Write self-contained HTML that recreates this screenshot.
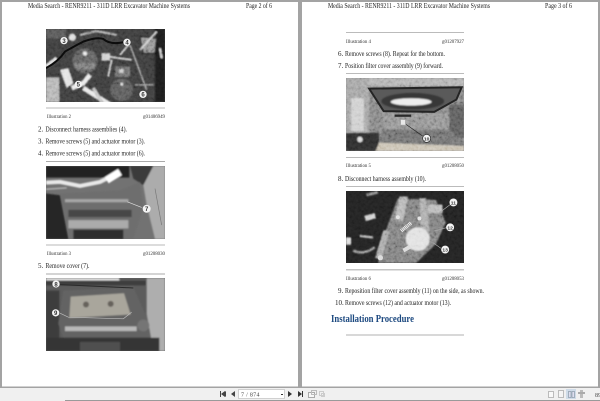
<!DOCTYPE html>
<html><head><meta charset="utf-8"><style>
html,body{margin:0;padding:0;width:600px;height:401px;overflow:hidden;background:#a3a3a3}
svg{display:block}
text{font-family:"Liberation Serif",serif;fill:#222}
.t{font-size:7px}.c{font-size:5.6px;fill:#333}
.n{font-family:"Liberation Sans",sans-serif;font-size:18px;font-weight:bold;fill:#333;text-anchor:middle}
.nz{mix-blend-mode:overlay}
</style></head><body>
<svg width="600" height="401" viewBox="0 0 600 401" xmlns="http://www.w3.org/2000/svg">
<defs>
<filter id="b" x="-5%" y="-5%" width="110%" height="110%"><feGaussianBlur stdDeviation="2.500"/></filter>
<filter id="tb"><feGaussianBlur stdDeviation="0.320"/></filter>
<filter id="noise" x="0" y="0" width="100%" height="100%"><feTurbulence type="fractalNoise" baseFrequency="0.11" numOctaves="2" seed="7"/><feColorMatrix values="1.500 0 0 0 -.25  1.500 0 0 0 -.25  1.500 0 0 0 -.25  0 0 0 0 .28"/></filter>
</defs>
<rect width="600" height="401" fill="#a3a3a3"/>
<rect x="2" y="2" width="296" height="384.500" fill="#fff"/>
<rect x="302" y="2" width="296" height="384.500" fill="#fff"/>
<rect x="0" y="388" width="600" height="13" fill="#f0f0f0"/>
<rect x="65" y="400" width="535" height="1" fill="#9a9a9a"/>

<g filter="url(#tb)">
<text class="t" x="28" y="8" textLength="162" lengthAdjust="spacingAndGlyphs">Media Search - RENR9211 - 311D LRR Excavator Machine Systems</text>
<text class="t" x="246" y="8" textLength="26" lengthAdjust="spacingAndGlyphs">Page 2 of 6</text>
<text class="t" x="328" y="8" textLength="162" lengthAdjust="spacingAndGlyphs">Media Search - RENR9211 - 311D LRR Excavator Machine Systems</text>
<text class="t" x="545" y="8" textLength="27" lengthAdjust="spacingAndGlyphs">Page 3 of 6</text>

<rect x="46" y="107" width="119" height="2" fill="#dcdcdc"/>
<text class="c" x="47" y="118" textLength="24" lengthAdjust="spacingAndGlyphs">Illustration 2</text>
<text class="c" x="143" y="118" textLength="22" lengthAdjust="spacingAndGlyphs">g01406949</text>
<text class="t" x="38" y="131.500">2.</text><text class="t" x="45.500" y="131.500" textLength="81.500" lengthAdjust="spacingAndGlyphs">Disconnect harness assemblies (4).</text>
<text class="t" x="38" y="143.500">3.</text><text class="t" x="45.500" y="143.500" textLength="99.500" lengthAdjust="spacingAndGlyphs">Remove screws (5) and actuator motor (3).</text>
<text class="t" x="38" y="155.500">4.</text><text class="t" x="45.500" y="155.500" textLength="99.500" lengthAdjust="spacingAndGlyphs">Remove screws (5) and actuator motor (6).</text>
<rect x="46" y="161" width="119" height="1" fill="#aaa"/>
<rect x="46" y="244" width="119" height="2" fill="#dcdcdc"/>
<text class="c" x="47" y="255" textLength="24" lengthAdjust="spacingAndGlyphs">Illustration 3</text>
<text class="c" x="143" y="255" textLength="22" lengthAdjust="spacingAndGlyphs">g01208030</text>
<text class="t" x="38" y="268">5.</text><text class="t" x="45.500" y="268" textLength="44" lengthAdjust="spacingAndGlyphs">Remove cover (7).</text>
<rect x="46" y="273" width="119" height="2" fill="#d4d4d4"/>

<rect x="346" y="32" width="118" height="1" fill="#bbb"/>
<text class="c" x="346" y="43" textLength="25" lengthAdjust="spacingAndGlyphs">Illustration 4</text>
<text class="c" x="442" y="43" textLength="22" lengthAdjust="spacingAndGlyphs">g01207927</text>
<text class="t" x="338" y="56">6.</text><text class="t" x="345" y="56" textLength="100" lengthAdjust="spacingAndGlyphs">Remove screws (8). Repeat for the bottom.</text>
<text class="t" x="338" y="68">7.</text><text class="t" x="345" y="68" textLength="98" lengthAdjust="spacingAndGlyphs">Position filter cover assembly (9) forward.</text>
<rect x="346" y="73" width="118" height="1" fill="#bbb"/>
<rect x="346" y="157" width="118" height="1" fill="#bbb"/>
<text class="c" x="346" y="167" textLength="25" lengthAdjust="spacingAndGlyphs">Illustration 5</text>
<text class="c" x="442" y="167" textLength="22" lengthAdjust="spacingAndGlyphs">g01208050</text>
<text class="t" x="338" y="181">8.</text><text class="t" x="345" y="181" textLength="81" lengthAdjust="spacingAndGlyphs">Disconnect harness assembly (10).</text>
<rect x="346" y="186" width="118" height="1" fill="#bbb"/>
<rect x="346" y="269" width="118" height="1.500" fill="#c4c4c4"/>
<text class="c" x="346" y="280" textLength="25" lengthAdjust="spacingAndGlyphs">Illustration 6</text>
<text class="c" x="442" y="280" textLength="22" lengthAdjust="spacingAndGlyphs">g01208053</text>
<text class="t" x="338" y="293">9.</text><text class="t" x="345" y="293" textLength="139" lengthAdjust="spacingAndGlyphs">Reposition filter cover assembly (11) on the side, as shown.</text>
<text class="t" x="335" y="305">10.</text><text class="t" x="345" y="305" textLength="106" lengthAdjust="spacingAndGlyphs">Remove screws (12) and actuator motor (13).</text>
<text x="331" y="322" font-size="10" font-weight="bold" style="fill:#1f4a80" textLength="83" lengthAdjust="spacingAndGlyphs">Installation Procedure</text>
<rect x="346" y="334" width="118" height="2" fill="#d8d8d8"/>
</g>

<!-- Photo 1 -->
<svg x="46" y="29" width="119" height="73" viewBox="18 12 357 220" preserveAspectRatio="none">
<rect x="18" y="12" width="357" height="220" fill="#3c3c3c"/>
<g filter="url(#b)">
<rect x="345" y="12" width="30" height="220" fill="#1e1e1e"/>
<rect x="18" y="12" width="60" height="30" fill="#555"/>
<circle cx="97" cy="37" r="11" fill="#ddd"/>
<path d="M120 30L170 18L230 30" stroke="#aaa" stroke-width="6" fill="none"/>
<path d="M300 35L350 40L345 85L310 85Z" fill="#8c8c8c" stroke="#222" stroke-width="4"/>
<circle cx="135" cy="108" r="38" fill="#5e5e5e"/>
<rect x="105" y="115" width="60" height="18" fill="#777"/>
<circle cx="135" cy="86" r="6" fill="#f0f0f0"/>
<rect x="185" y="85" width="25" height="22" fill="#d0d0d0"/>
<rect x="225" y="125" width="45" height="32" fill="#6c6c6c"/>
<rect x="238" y="132" width="12" height="12" fill="#ccc"/>
<circle cx="245" cy="195" r="34" fill="#5a5a5a"/>
<circle cx="245" cy="178" r="4" fill="#eee"/>
<rect x="18" y="158" width="40" height="74" fill="#b2b2b2"/>
<polygon points="60,135 85,130 100,175 80,190" fill="#e2e2e2"/>
<path d="M95 190L130 175L150 150M130 190L210 240" stroke="#e8e8e8" stroke-width="14" fill="none"/>
<path d="M190 240L160 190" stroke="#c4c4c4" stroke-width="10"/>
<path d="M18 125L50 100" stroke="#e0e0e0" stroke-width="11"/>
<path d="M205 95L275 105M215 105L205 155M240 90L265 60M300 75L350 20" stroke="#d4d4d4" stroke-width="5" fill="none"/>
<path d="M270 60L320 195M285 180L340 180" stroke="#a8a8a8" stroke-width="4" fill="none"/>
<path d="M360 70L365 100" stroke="#ddd" stroke-width="5"/>
</g>
<rect class="nz" x="18" y="12" width="357" height="220" filter="url(#noise)"/>
<path d="M18 130Q55 110 75 80Q110 60 130 50Q170 35 190 42Q210 60 250 52" stroke="#0c0c0c" stroke-width="6" fill="none"/>
<circle cx="72" cy="47" r="11" fill="#f2f2f2"/><text class="n" x="72" y="54">3</text>
<circle cx="261" cy="52" r="11" fill="#f2f2f2"/><text class="n" x="261" y="59">4</text>
<circle cx="115" cy="179" r="11" fill="#f2f2f2"/><text class="n" x="115" y="186">5</text>
<circle cx="309" cy="209" r="11" fill="#f2f2f2"/><text class="n" x="309" y="216">6</text>
</svg>

<!-- Photo 2 -->
<svg x="46" y="166" width="119" height="73" viewBox="18 12 357 220" preserveAspectRatio="none">
<rect x="18" y="12" width="357" height="220" fill="#727272"/>
<g filter="url(#b)">
<rect x="18" y="12" width="250" height="35" fill="#242424"/>
<polygon points="270,12 345,12 310,70 280,50" fill="#3a3a3a"/>
<polygon points="340,12 375,12 375,232 345,232 320,130 310,70" fill="#acacac"/>
<polygon points="18,95 60,100 85,232 18,232" fill="#282828"/>
<polygon points="60,95 240,85 300,60 310,140 280,232 90,232" fill="#6e6e6e"/>
<rect x="75" y="112" width="190" height="9" fill="#a8a8a8"/>
<polygon points="85,175 265,175 265,200 85,200" fill="#ababab"/>
<rect x="100" y="204" width="150" height="28" fill="#2e2e2e"/>
<rect x="85" y="144" width="190" height="22" fill="#474747"/>
<path d="M18 62L60 60L120 72L180 60L240 30" stroke="#e8e8e8" stroke-width="12" fill="none"/>
<path d="M200 55L240 30" stroke="#fff" stroke-width="22" fill="none"/>
<path d="M18 82L80 78" stroke="#bbb" stroke-width="4"/>
</g>
<path d="M262 120L305 137" stroke="#ddd" stroke-width="2"/>
<path d="M345 80L365 190" stroke="#777" stroke-width="2" fill="none"/>
<circle cx="320" cy="141" r="12" fill="#f4f4f4"/><text class="n" x="320" y="148">7</text>
</svg>

<!-- Photo 3 -->
<svg x="46" y="278" width="119" height="73" viewBox="18 12 357 220" preserveAspectRatio="none">
<rect x="18" y="12" width="357" height="220" fill="#5c5c5c"/>
<g filter="url(#b)">
<rect x="18" y="12" width="220" height="8" fill="#ddd"/>
<rect x="18" y="20" width="300" height="14" fill="#3c3c3c"/>
<polygon points="320,12 375,12 375,232 340,232 320,120" fill="#aeaeae"/>
<rect x="18" y="50" width="40" height="182" fill="#3e3e3e"/>
<rect x="18" y="192" width="340" height="40" fill="#343434"/>
<polygon points="70,50 280,40 320,130 330,190 70,190 55,150" fill="#636363"/>
<polygon points="92,68 252,58 272,122 88,132" fill="#a9a69c"/>
<rect x="75" y="158" width="215" height="14" fill="#b8b8b8"/>
<circle cx="310" cy="155" r="18" fill="#747474"/>
<rect x="120" y="205" width="120" height="27" fill="#505050"/>
<circle cx="138" cy="92" r="9" fill="#66625c"/>
<circle cx="212" cy="90" r="9" fill="#66625c"/>
</g>
<path d="M60 32L280 42" stroke="#2a2a2a" stroke-width="3"/>
<path d="M60 118L85 130L250 135L275 115" stroke="#bbb" stroke-width="2" fill="none"/>
<circle cx="48" cy="30" r="11" fill="#f4f4f4"/><text class="n" x="48" y="37">8</text>
<circle cx="47" cy="117" r="11" fill="#f4f4f4"/><text class="n" x="47" y="124">9</text>
</svg>

<!-- Photo 4 -->
<svg x="346" y="78" width="118" height="73" viewBox="18 10 357 220" preserveAspectRatio="none">
<rect x="18" y="10" width="357" height="220" fill="#808080"/>
<g filter="url(#b)">
<rect x="18" y="10" width="70" height="170" fill="#a0a0a0"/>
<rect x="34" y="70" width="38" height="100" fill="#cdcdcd"/>
<rect x="85" y="10" width="290" height="25" fill="#b0b0b0"/>
<rect x="130" y="115" width="210" height="50" fill="#8e8e8e"/>
<rect x="330" y="90" width="45" height="100" fill="#5c5c5c"/>
<rect x="18" y="175" width="100" height="55" fill="#2e2e2e"/>
<circle cx="60" cy="195" r="8" fill="#ddd"/>
<polygon points="130,165 330,165 375,205 375,230 110,230" fill="#6e6e6e"/>
<polygon points="118,205 375,215 375,230 108,230" fill="#c8c0b0"/>
</g>
<rect class="nz" x="18" y="10" width="357" height="220" filter="url(#noise)"/>
<polygon points="88,42 368,38 352,75 285,112 132,110" fill="#5a5a5a" stroke="#242424" stroke-width="6"/>
<g filter="url(#b)">
<ellipse cx="220" cy="80" rx="95" ry="25" fill="#383838"/>
<ellipse cx="215" cy="82" rx="62" ry="11" fill="#eee"/>
</g>
<rect x="165" y="120" width="50" height="7" fill="#2a2a2a"/>
<rect x="184" y="136" width="13" height="15" fill="#e8e8e8"/>
<path d="M200 150L250 185" stroke="#2a2a2a" stroke-width="2"/>
<circle cx="262" cy="192" r="12" fill="#f4f4f4" stroke="#222" stroke-width="2"/><text class="n" x="262" y="198" style="font-size:15px">10</text>
</svg>

<!-- Photo 5 -->
<svg x="346" y="191" width="118" height="72" viewBox="18 8 357 220" preserveAspectRatio="none">
<rect x="18" y="8" width="357" height="220" fill="#222"/>
<g filter="url(#b)">
<polygon points="175,30 290,35 320,105 290,170 230,228 115,228 130,150" fill="#7a7a7a"/>
<polygon points="180,25 205,25 190,100 165,95" fill="#b4b4b4"/>
<polygon points="240,30 260,30 270,130 245,130" fill="#a8a8a8"/>
<rect x="265" y="50" width="45" height="25" fill="#b8b8b8"/>
<circle cx="235" cy="155" r="36" fill="#e0e0e0"/>
<rect x="75" y="80" width="32" height="16" fill="#d0d0d0" transform="rotate(-15 90 88)"/>
<rect x="18" y="150" width="15" height="22" fill="#ddd"/>
<path d="M40 190Q70 205 105 180" stroke="#999" stroke-width="7" fill="none"/>
<path d="M60 145L100 150" stroke="#b0b0b0" stroke-width="7"/>
<path d="M140 130L115 215" stroke="#a8a8a8" stroke-width="18"/>
<path d="M80 20L115 12" stroke="#888" stroke-width="8"/>
</g>
<rect class="nz" x="18" y="8" width="357" height="220" filter="url(#noise)"/>
<path d="M185 130L215 105" stroke="#eee" stroke-width="11" stroke-dasharray="3 2"/>
<circle cx="122" cy="212" r="8" fill="#ddd"/>
<circle cx="175" cy="88" r="6" fill="#e4e4e4"/>
<circle cx="240" cy="92" r="6" fill="#e4e4e4"/>
<rect x="190" y="178" width="24" height="12" fill="#ddd" transform="rotate(-30 202 184)"/>
<path d="M300 75L335 48M285 130L322 120M280 165L305 183" stroke="#aaa" stroke-width="2"/>
<circle cx="343" cy="43" r="12" fill="#f4f4f4"/><text class="n" x="343" y="49" style="font-size:15px">11</text>
<circle cx="333" cy="119" r="12" fill="#f4f4f4"/><text class="n" x="333" y="125" style="font-size:15px">12</text>
<circle cx="318" cy="187" r="12" fill="#f4f4f4"/><text class="n" x="318" y="193" style="font-size:15px">13</text>
</svg>

<!-- Toolbar -->
<g filter="url(#tb)">
<rect x="220" y="391" width="1" height="6" fill="#444"/>
<polygon points="225,391 225,397 221,394" fill="#444"/>
<polygon points="226,391 226,397 222,394" fill="#444"/>
<polygon points="235,391 235,397 231,394" fill="#444"/>
<rect x="238.500" y="389.500" width="46" height="9" fill="#fff" stroke="#d0d0d0"/>
<text x="241" y="396.500" font-size="6" style="fill:#444;letter-spacing:.3px">7 / 874</text>
<rect x="281" y="394" width="2" height="1" fill="#333"/>
<polygon points="288,391 288,397 292,394" fill="#333"/>
<polygon points="298,391 298,397 302,394" fill="#333"/>
<rect x="302" y="391" width="1" height="6" fill="#333"/>
<rect x="308.500" y="392.500" width="6" height="5" fill="#f8f8f8" stroke="#aaa"/>
<rect x="311.500" y="390.500" width="5" height="4" fill="none" stroke="#bbb"/>
<rect x="319.500" y="391.500" width="4" height="4" fill="none" stroke="#ccc"/>
<rect x="321.500" y="393.500" width="3" height="3" fill="none" stroke="#ccc"/>
<rect x="548.500" y="391.500" width="5" height="6" fill="#f8f8f8" stroke="#bbb"/>
<rect x="558.500" y="390.500" width="5" height="7" fill="#f4f4f4" stroke="#bbb"/>
<rect x="566" y="389" width="10" height="10" fill="#cfdbe8"/>
<rect x="568.500" y="391.500" width="2.500" height="6" fill="#dde" stroke="#8a9aa8" stroke-width=".7"/>
<rect x="572" y="391.500" width="2.500" height="6" fill="#dde" stroke="#8a9aa8" stroke-width=".7"/>
<rect x="580" y="390" width="3" height="8" fill="#bbb"/>
<rect x="578" y="392" width="7" height="2" fill="#aaa"/>
<text x="595" y="397" font-size="6" style="fill:#444">89</text>
</g>
</svg>
</body></html>
